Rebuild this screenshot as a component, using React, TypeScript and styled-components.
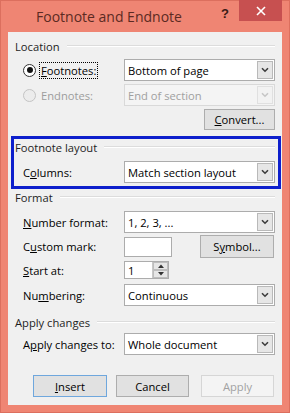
import React from 'react';
import styled, { createGlobalStyle } from 'styled-components';

const Global = createGlobalStyle`
  html, body { margin: 0; padding: 0; background: #ffffff; }
  body { font-family: "Open Sans", "Noto Sans", sans-serif; }
`;

const Window = styled.div`
  width: 290px;
  height: 413px;
  box-sizing: border-box;
  background: #ef8573;
  border: 1px solid #dc6f5e;
  display: flex;
  flex-direction: column;
`;

const TitleBar = styled.div`
  height: 31px;
  display: flex;
  align-items: flex-start;
`;

const Title = styled.div`
  flex: 1;
  padding-left: 35px;
  font-size: 14px;
  line-height: 32px;
  color: #5b2a22;
`;

const Help = styled.div`
  width: 14px;
  margin-right: 4px;
  margin-top: 5px;
  font-size: 13px;
  font-weight: 700;
  color: #3a1a14;
  font-family: "Liberation Sans", sans-serif;
`;

const Close = styled.div`
  width: 43px;
  height: 21px;
  margin-top: -1px;
  margin-right: 7px;
  background: #c75050;
  display: flex;
  align-items: center;
  justify-content: center;
`;

const Body = styled.div`
  flex: 1;
  margin: 0 7px 7px;
  background: #f0f0f0;
  padding: 6px 7px 0;
  display: flex;
  flex-direction: column;
  font-size: 11.2px;
  color: #000;
`;

const GroupHeader = styled.div<{ $mt?: number }>`
  display: flex;
  align-items: center;
  height: 16px;
  margin-top: ${p => p.$mt ?? 0}px;
  color: #1e1e1e;
  &::after {
    content: '';
    flex: 1;
    margin-left: 7px;
    border-top: 1px solid #dcdcdc;
    border-bottom: 1px solid #ffffff;
  }
`;

const Row = styled.div<{ $mt: number; $h: number }>`
  display: flex;
  align-items: center;
  margin-top: ${p => p.$mt}px;
  height: ${p => p.$h}px;
  padding-left: 8px;
`;

const Label = styled.span`
  width: 101px;
  flex: none;
  white-space: nowrap;
`;

const RadioLabel = styled.label`
  width: 101px;
  flex: none;
  display: flex;
  align-items: center;
  white-space: nowrap;
`;

const RadioDot = styled.span<{ $checked?: boolean; $disabled?: boolean }>`
  width: 13px;
  height: 13px;
  box-sizing: border-box;
  border-radius: 50%;
  border: 1px solid ${p => (p.$disabled ? '#c4c4c4' : '#333333')};
  background: ${p => (p.$disabled ? '#ececec' : '#ffffff')};
  display: flex;
  align-items: center;
  justify-content: center;
  margin-right: 4px;
  &::after {
    content: '';
    display: ${p => (p.$checked ? 'block' : 'none')};
    width: 6px;
    height: 6px;
    border-radius: 50%;
    background: #111111;
  }
`;

const RadioText = styled.span<{ $focus?: boolean; $disabled?: boolean }>`
  padding: 0 1px;
  outline: ${p => (p.$focus ? '1px dotted #000' : 'none')};
  color: ${p => (p.$disabled ? '#9d9d9d' : '#000')};
  line-height: 15px;
`;

const Select = styled.div<{ $disabled?: boolean }>`
  flex: 1;
  height: 100%;
  box-sizing: border-box;
  border: 1px solid ${p => (p.$disabled ? '#d9d9d9' : '#acacac')};
  background: ${p => (p.$disabled ? '#f4f4f4' : '#ffffff')};
  color: ${p => (p.$disabled ? '#a0a0a0' : '#000')};
  display: flex;
`;

const SelectText = styled.span`
  flex: 1;
  padding-left: 3px;
  display: flex;
  align-items: center;
  white-space: nowrap;
`;

const Arrow = styled.span<{ $disabled?: boolean }>`
  width: 16px;
  margin: 1px;
  box-sizing: border-box;
  border: 1px solid ${p => (p.$disabled ? '#e0e0e0' : '#b9b9b9')};
  background: ${p => (p.$disabled ? '#f2f2f2' : '#e6e6e6')};
  display: flex;
  align-items: center;
  justify-content: center;
`;

const Button = styled.div<{ $w: number; $ml?: number; $mr?: number; $default?: boolean; $disabled?: boolean }>`
  width: ${p => p.$w}px;
  height: 100%;
  box-sizing: border-box;
  margin-left: ${p => (p.$ml === undefined ? 'auto' : `${p.$ml}px`)};
  margin-right: ${p => p.$mr ?? 0}px;
  border: 1px solid ${p => (p.$default ? '#6fa7dd' : p.$disabled ? '#d6d6d6' : '#adadad')};
  background: ${p => (p.$disabled ? '#f4f4f4' : '#e1e1e1')};
  color: ${p => (p.$disabled ? '#a2a2a2' : '#000')};
  display: flex;
  align-items: center;
  justify-content: center;
  white-space: nowrap;
`;

const TextBox = styled.div<{ $w: number; $h: number }>`
  width: ${p => p.$w}px;
  height: ${p => p.$h}px;
  box-sizing: border-box;
  border: 1px solid #acacac;
  background: #ffffff;
  display: flex;
  align-items: center;
`;

const BoxValue = styled.span`
  flex: 1;
  padding-left: 3px;
`;

const Spinner = styled.div`
  width: 15px;
  height: 100%;
  display: flex;
  flex-direction: column;
  border-left: 1px solid #c8c8c8;
`;

const SpinBtn = styled.div`
  flex: 1;
  background: #e6e6e6;
  border: 1px solid #bdbdbd;
  display: flex;
  align-items: center;
  justify-content: center;
`;

const Highlight = styled.div`
  margin: 6px -6px 0 -4px;
  border: 3px solid #0d1fcc;
  padding: 0 3px 3px 1px;
  display: flex;
  flex-direction: column;
`;

const Chevron = ({ color = '#3c3c3c' }: { color?: string }) => (
  <svg width="8" height="6" viewBox="0 0 8 6">
    <polyline points="1,1.2 4,4.2 7,1.2" fill="none" stroke={color} strokeWidth="1.6" />
  </svg>
);

const Dropdown = ({ value, disabled }: { value: string; disabled?: boolean }) => (
  <Select $disabled={disabled}>
    <SelectText>{value}</SelectText>
    <Arrow $disabled={disabled}>
      <Chevron color={disabled ? '#c6c6c6' : '#3c3c3c'} />
    </Arrow>
  </Select>
);

export default function App() {
  return (
    <>
      <Global />
      <Window>
        <TitleBar>
          <Title>Footnote and Endnote</Title>
          <Help>?</Help>
          <Close>
            <svg width="10" height="10" viewBox="0 0 10 10">
              <line x1="1" y1="1" x2="9" y2="9" stroke="#fff" strokeWidth="1.6" />
              <line x1="9" y1="1" x2="1" y2="9" stroke="#fff" strokeWidth="1.6" />
            </svg>
          </Close>
        </TitleBar>
        <Body>
          <GroupHeader>Location</GroupHeader>
          <Row $mt={5} $h={22}>
            <RadioLabel>
              <RadioDot $checked />
              <RadioText $focus>
                <u>F</u>ootnotes:
              </RadioText>
            </RadioLabel>
            <Dropdown value="Bottom of page" />
          </Row>
          <Row $mt={3} $h={22}>
            <RadioLabel>
              <RadioDot $disabled />
              <RadioText $disabled>Endnotes:</RadioText>
            </RadioLabel>
            <Dropdown value="End of section" disabled />
          </Row>
          <Row $mt={3} $h={21}>
            <Button $w={71}>
              <span>
                <u>C</u>onvert...
              </span>
            </Button>
          </Row>

          <Highlight>
            <GroupHeader>Footnote layout</GroupHeader>
            <Row $mt={6} $h={22}>
              <Label>
                C<u>o</u>lumns:
              </Label>
              <Dropdown value="Match section layout" />
            </Row>
          </Highlight>

          <GroupHeader>Format</GroupHeader>
          <Row $mt={6} $h={22}>
            <Label>
              <u>N</u>umber format:
            </Label>
            <Dropdown value="1, 2, 3, ..." />
          </Row>
          <Row $mt={2} $h={23}>
            <Label>
              C<u>u</u>stom mark:
            </Label>
            <TextBox $w={48} $h={20} />
            <Button $w={74} $mr={1}>
              <span>
                S<u>y</u>mbol...
              </span>
            </Button>
          </Row>
          <Row $mt={3} $h={18}>
            <Label>
              <u>S</u>tart at:
            </Label>
            <TextBox $w={45} $h={18}>
              <BoxValue>1</BoxValue>
              <Spinner>
                <SpinBtn>
                  <svg width="6" height="4" viewBox="0 0 6 4">
                    <polygon points="0,4 3,0.5 6,4" fill="#333" />
                  </svg>
                </SpinBtn>
                <SpinBtn>
                  <svg width="6" height="4" viewBox="0 0 6 4">
                    <polygon points="0,0 6,0 3,3.5" fill="#333" />
                  </svg>
                </SpinBtn>
              </Spinner>
            </TextBox>
          </Row>
          <Row $mt={5} $h={22}>
            <Label>
              Nu<u>m</u>bering:
            </Label>
            <Dropdown value="Continuous" />
          </Row>

          <GroupHeader $mt={8}>Apply changes</GroupHeader>
          <Row $mt={3} $h={22}>
            <Label>
              A<u>p</u>ply changes to:
            </Label>
            <Dropdown value="Whole document" />
          </Row>

          <Row $mt={20} $h={22}>
            <Button $w={74} $ml={10} $default>
              <span>
                <u>I</u>nsert
              </span>
            </Button>
            <Button $w={73} $ml={9}>
              Cancel
            </Button>
            <Button $w={73} $ml={12} $disabled>
              Apply
            </Button>
          </Row>
        </Body>
      </Window>
    </>
  );
}
